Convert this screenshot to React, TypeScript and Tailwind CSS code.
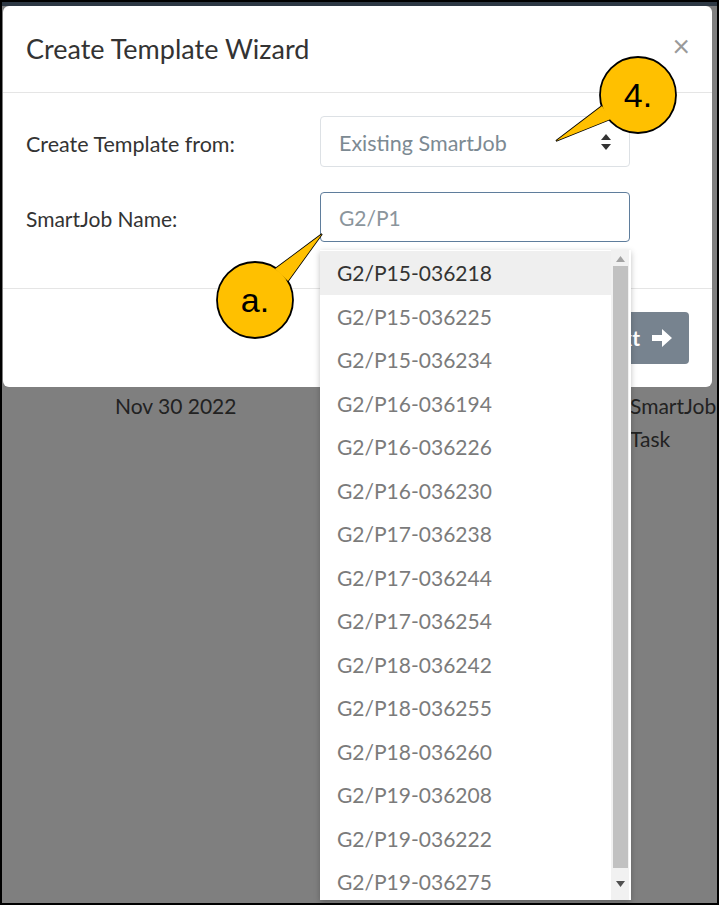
import React from "react";

const items = [
  "G2/P15-036218",
  "G2/P15-036225",
  "G2/P15-036234",
  "G2/P16-036194",
  "G2/P16-036226",
  "G2/P16-036230",
  "G2/P17-036238",
  "G2/P17-036244",
  "G2/P17-036254",
  "G2/P18-036242",
  "G2/P18-036255",
  "G2/P18-036260",
  "G2/P19-036208",
  "G2/P19-036222",
  "G2/P19-036275",
];

function Callout({
  cx,
  cy,
  r,
  base,
  tip,
  label,
}: {
  cx: number;
  cy: number;
  r: number;
  base: [number, number][];
  tip: [number, number];
  label: string;
}) {
  const pts = `${base[0][0]},${base[0][1]} ${tip[0]},${tip[1]} ${base[1][0]},${base[1][1]}`;
  return (
    <g>
      <polygon points={pts} fill="#ffc000" stroke="#000" strokeWidth="1.6" strokeLinejoin="miter" />
      <ellipse cx={cx} cy={cy} rx={r} ry={r} fill="#ffc000" stroke="#000" strokeWidth="1.8" />
      <polygon points={pts} fill="#ffc000" stroke="none" />
      <text
        x={cx}
        y={cy + 12}
        textAnchor="middle"
        fontFamily="'Liberation Sans', Arial, sans-serif"
        fontSize="34"
        fill="#000"
      >
        {label}
      </text>
    </g>
  );
}

export default function App() {
  return (
    <div
      className="relative w-[719px] h-[905px] overflow-hidden border-2 border-black bg-[#7f7f7f] text-[#333]"
      style={{ fontFamily: "Lato, 'Open Sans', sans-serif" }}
    >
      <div className="h-[4px] bg-[#2d3844]" />
      <div className="ml-[1px] w-[709px] h-[381px] rounded-[6px] bg-white flex flex-col">
        <div className="h-[87px] border-b border-[#e5e5e5] flex items-center justify-between pl-[23px] pr-[22px]">
          <div className="text-[27px] leading-none text-[#333] -mt-[1px]">Create Template Wizard</div>
          <div className="text-[30px] leading-none text-[#9a9a9a] -mt-[8px]">×</div>
        </div>
        <div className="h-[196px] border-b border-[#e5e5e5] pl-[23px] pt-[23px] flex flex-col gap-[25px]">
          <div className="flex items-center">
            <div className="w-[294px] text-[21.5px] text-[#333] pt-[5px]">Create Template from:</div>
            <div className="w-[310px] h-[51px] rounded-[4px] border border-[#dde1e5] flex items-center justify-between pl-[18px] pr-[18px]">
              <span className="text-[21.5px] text-[#7c8a93] pt-[3px]">Existing SmartJob</span>
              <svg width="10" height="16" viewBox="0 0 10 16">
                <path d="M5 0 L10 6 L0 6 Z" fill="#333" />
                <path d="M0 10 L10 10 L5 16 Z" fill="#333" />
              </svg>
            </div>
          </div>
          <div className="flex items-center">
            <div className="w-[294px] text-[21px] text-[#333] pt-[3px]">SmartJob Name:</div>
            <div className="w-[310px] h-[50px] rounded-[4px] border border-[#5f7d9c] flex items-center pl-[18px]">
              <span className="text-[21px] text-[#8b959c] pt-[2px]">G2/P1</span>
            </div>
          </div>
        </div>
        <div className="flex-1 flex justify-end pt-[23px] pr-[23px]">
          <div className="h-[52px] rounded-[4px] bg-[#77838f] flex items-center gap-[12px] px-[17px] text-white">
            <span className="text-[21px] font-bold">Next</span>
            <svg width="20" height="18" viewBox="0 0 20 18">
              <path d="M0 6 H10 V0 L20 9 L10 18 V12 H0 Z" fill="#fff" />
            </svg>
          </div>
        </div>
      </div>
      <div className="flex pt-[2px] text-[21px] text-[#222] leading-[33px]">
        <div className="pl-[113px] w-[628px]">Nov 30 2022</div>
        <div className="flex flex-col">
          <span>SmartJob</span>
          <span>Task</span>
        </div>
      </div>

      <div className="absolute left-[318px] top-[248px] w-[311px] h-[650px] bg-white shadow-[0_2px_6px_rgba(0,0,0,0.25)] flex overflow-hidden">
        <div className="flex-1 pt-[1px] flex flex-col">
          {items.map((it, i) => (
            <div
              key={it}
              className={
                "h-[43.5px] shrink-0 flex items-center pl-[17px] text-[21px] " +
                (i === 0 ? "bg-[#efefef] text-[#333]" : "text-[#7b7b7b]")
              }
            >
              {it}
            </div>
          ))}
        </div>
        <div className="w-[18px] mr-[2px] bg-[#f1f1f1] flex flex-col items-center">
          <div className="h-[16px] flex items-center justify-center pt-[2px]">
            <svg width="9" height="6" viewBox="0 0 9 6">
              <path d="M4.5 0 L9 6 L0 6 Z" fill="#a3a3a3" />
            </svg>
          </div>
          <div className="w-[15px] h-[602px] bg-[#c1c1c1]" />
          <div className="flex-1 flex items-center justify-center">
            <svg width="9" height="6" viewBox="0 0 9 6">
              <path d="M0 0 L9 0 L4.5 6 Z" fill="#505050" />
            </svg>
          </div>
        </div>
      </div>

      <svg
        className="absolute left-0 top-0 pointer-events-none"
        width="715"
        height="901"
        viewBox="2 2 715 901"
      >
        <Callout cx={638} cy={95} r={38} base={[[602, 106], [611, 119]]} tip={[556, 141]} label="4." />
        <Callout cx={255} cy={300} r={38} base={[[275, 269], [288, 281]]} tip={[322, 234]} label="a." />
      </svg>
    </div>
  );
}
